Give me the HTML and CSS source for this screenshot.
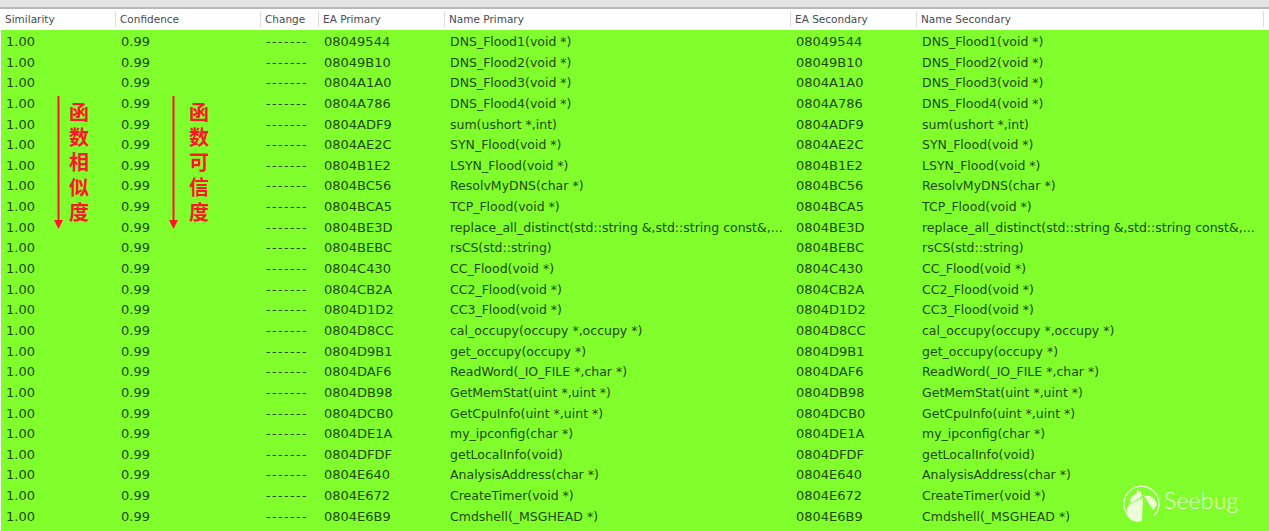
FILE: index.html
```html
<!DOCTYPE html>
<html lang="en">
<head>
<meta charset="utf-8">
<title>BinDiff matched functions</title>
<link rel="stylesheet" href="styles.css">
</head>
<body>
<div class="window">
  <div class="titlebar"></div>
  <div class="head row-grid">
    <div class="hcell">Similarity</div>
    <div class="hcell">Confidence</div>
    <div class="hcell">Change</div>
    <div class="hcell">EA Primary</div>
    <div class="hcell">Name Primary</div>
    <div class="hcell">EA Secondary</div>
    <div class="hcell">Name Secondary</div>
    <div class="hcell hcell-last"></div>
  </div>
  <div class="body" id="rows"></div>

  <div class="note note-a">
    <svg class="arrow" width="9" height="134" viewBox="0 0 9 134"><path d="M3.500 0h2v124h-2z"/><path d="M0 124h9l-4.500 9z"/></svg>
    <div class="note-text">函<br>数<br>相<br>似<br>度</div>
  </div>
  <div class="note note-b">
    <svg class="arrow" width="9" height="134" viewBox="0 0 9 134"><path d="M3.500 0h2v124h-2z"/><path d="M0 124h9l-4.500 9z"/></svg>
    <div class="note-text">函<br>数<br>可<br>信<br>度</div>
  </div>

  <div class="logo">
    <svg width="40" height="42" viewBox="0 0 40 42">
      <path class="ring" d="M11 35.500A17.500 17.500 0 1 1 33 33"/>
      <path class="bug" d="M16 10.500L21 14L10 20C8 17 10 12 16 10.500Z"/>
      <path class="bug" d="M9 21L22 15L21 38C14 40 8 37 6 32C5 28 6 24 9 21Z"/>
      <path class="bug" d="M23 13C29 11 34 15 36 22L32 27Z"/>
      <path class="bug" d="M17 6l1.500 3 2-1-1 3 3 1-4 1-3-3z"/>
    </svg>
    <span class="logo-text">Seebug</span>
  </div>
</div>
<script src="rows.js"></script>
</body>
</html>
```
FILE: rows.js
```js
var data = [
  ["08049544", "DNS_Flood1(void *)"],
  ["08049B10", "DNS_Flood2(void *)"],
  ["0804A1A0", "DNS_Flood3(void *)"],
  ["0804A786", "DNS_Flood4(void *)"],
  ["0804ADF9", "sum(ushort *,int)"],
  ["0804AE2C", "SYN_Flood(void *)"],
  ["0804B1E2", "LSYN_Flood(void *)"],
  ["0804BC56", "ResolvMyDNS(char *)"],
  ["0804BCA5", "TCP_Flood(void *)"],
  ["0804BE3D", "replace_all_distinct(std::string &,std::string const&,..."],
  ["0804BEBC", "rsCS(std::string)"],
  ["0804C430", "CC_Flood(void *)"],
  ["0804CB2A", "CC2_Flood(void *)"],
  ["0804D1D2", "CC3_Flood(void *)"],
  ["0804D8CC", "cal_occupy(occupy *,occupy *)"],
  ["0804D9B1", "get_occupy(occupy *)"],
  ["0804DAF6", "ReadWord(_IO_FILE *,char *)"],
  ["0804DB98", "GetMemStat(uint *,uint *)"],
  ["0804DCB0", "GetCpuInfo(uint *,uint *)"],
  ["0804DE1A", "my_ipconfig(char *)"],
  ["0804DFDF", "getLocalInfo(void)"],
  ["0804E640", "AnalysisAddress(char *)"],
  ["0804E672", "CreateTimer(void *)"],
  ["0804E6B9", "Cmdshell(_MSGHEAD *)"]
];
var host = document.getElementById("rows");
data.forEach(function (d) {
  var row = document.createElement("div");
  row.className = "row row-grid";
  [["1.00", "num"], ["0.99", "num"], ["-------", "dash"], [d[0], "ea"], [d[1], "name"], [d[0], "ea"], [d[1], "name"], ["", "num"]].forEach(function (t) {
    var c = document.createElement("div");
    c.className = "cell " + t[1];
    c.textContent = t[0];
    row.appendChild(c);
  });
  host.appendChild(row);
});
```
FILE: styles.css
```css
* { box-sizing: border-box; }
html, body { margin: 0; height: 100%; overflow: hidden; background: #fff; }
.window {
  position: relative;
  width: 1269px;
  height: 531px;
  overflow: hidden;
  font-family: "DejaVu Sans", sans-serif;
}
.titlebar {
  height: 9px;
  background: #e4e4e4;
  border-bottom: 2px solid #b8b8b8;
}
.row-grid {
  display: grid;
  grid-template-columns: 115px 145px 58px 126px 346px 126px 347px 6px;
}
.head {
  height: 21px;
  background: #fff;
}
.hcell {
  padding: 3px 0 0 5px;
  font-size: 10.500px;
  line-height: 14px;
  color: #4a4a4a;
  white-space: nowrap;
  overflow: hidden;
  position: relative;
}
.hcell + .hcell::before {
  content: "";
  position: absolute;
  left: 0;
  top: 2px;
  bottom: 3px;
  width: 1px;
  background: #dedede;
}
.body {
  height: 501px;
  background: #80ff2d;
  margin-left: 1px;
  padding-top: 1px;
}
.row {
  height: 20.65px;
  margin-left: -1px;
}
.cell {
  padding-left: 6px;
  padding-top: 1px;
  font-size: 12.500px;
  line-height: 20px;
  color: #1e4a0c;
  white-space: nowrap;
  overflow: hidden;
}
.num, .ea { font-size: 13px; }
.dash { letter-spacing: 1.500px; }
.note {
  position: absolute;
  top: 96px;
  display: flex;
  color: #ff1428;
}
.note-a { left: 54px; }
.note-b { left: 169px; }
.arrow { fill: #ff1428; flex: none; }
.note-text {
  margin: 3px 0 0 6px;
  font-family: "Noto Sans CJK SC", sans-serif;
  font-size: 20px;
  font-weight: 700;
  line-height: 25px;
}
.note-b .note-text { margin-left: 11px; }
.logo {
  position: absolute;
  left: 1121px;
  top: 483px;
  display: flex;
  align-items: center;
  gap: 3px;
  color: #ecffd9;
}
.ring { fill: none; stroke: #ecffd9; stroke-width: 1.300; }
.bug { fill: #ecffd9; }
.logo-text {
  font-family: "Lato", sans-serif;
  font-weight: 300;
  font-size: 23px;
  line-height: 30px;
  margin-top: -8px;
  letter-spacing: 0.200px;
}
```
